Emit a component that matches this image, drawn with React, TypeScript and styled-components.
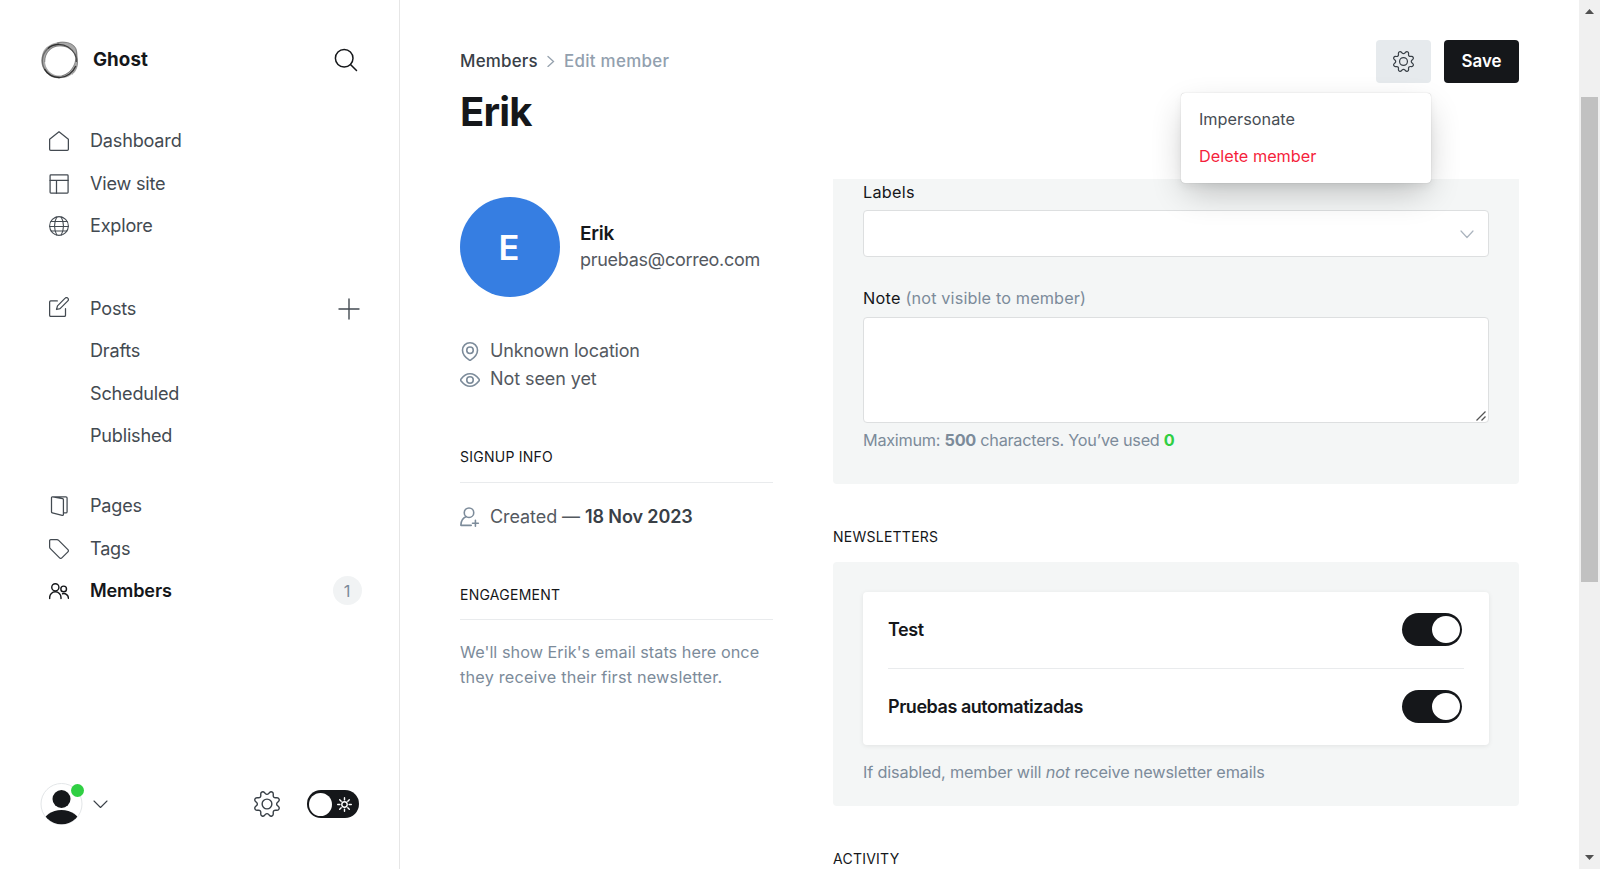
import React from 'react';
import styled, { createGlobalStyle, css } from 'styled-components';

const GlobalStyle = createGlobalStyle`
  *, *::before, *::after { box-sizing: border-box; }
  html, body { margin: 0; padding: 0; overflow: hidden; background: #fff; }
  body { font-family: Inter, "Liberation Sans", sans-serif; color: #15171a; }
  button { font: inherit; }
`;

const Page = styled.div`
  display: flex;
  width: 1600px;
  height: 869px;
  overflow: hidden;
`;

/* ---------- sidebar ---------- */

const Sidebar = styled.aside`
  display: flex;
  flex-direction: column;
  flex: none;
  width: 400px;
  border-right: 1px solid #e6e6e6;
`;

const Brand = styled.header`
  display: flex;
  align-items: center;
  height: 80px;
  margin-top: 20px;
  padding: 0 41px 0 40px;
`;

const BrandName = styled.span`
  flex: 1;
  margin-left: 13px;
  font-size: 18.75px;
  font-weight: 700;
  line-height: 24px;
  letter-spacing: 0.05px;
`;

const Nav = styled.nav`
  flex: 1;
  padding: 20px 37px 0 49px;
`;

const NavGroup = styled.div<{ $gap: number }>`
  margin-bottom: ${(p) => p.$gap}px;
`;

const NavItem = styled.a<{ $active?: boolean }>`
  display: grid;
  grid-template-columns: 20px 1fr auto;
  column-gap: 21px;
  align-items: center;
  height: 42.4px;
  font-size: 18.1px;
  line-height: 24px;
  letter-spacing: ${(p) => (p.$active ? -0.15 : -0.2)}px;
  color: ${(p) => (p.$active ? '#15171a' : '#434a51')};
  font-weight: ${(p) => (p.$active ? 600 : 400)};
`;

const NavLabel = styled.span`
  grid-column: 2;
  padding-bottom: 2px;
`;

const RaisedIcon = styled.span`
  display: flex;
  padding-bottom: 3px;
`;

const AddIcon = styled.span`
  display: flex;
  margin-right: 1px;
`;

const Badge = styled.span`
  display: flex;
  align-items: center;
  justify-content: center;
  width: 29px;
  height: 29px;
  padding-right: 1px;
  border-radius: 15px;
  background: #f1f3f4;
  color: #7c8b9a;
  font-size: 16.5px;
  font-weight: 400;
`;

const SidebarFooter = styled.footer`
  display: flex;
  align-items: center;
  height: 42px;
  margin-bottom: 44px;
  padding: 0 40px;
  color: #394047;
`;

const UserAvatar = styled.div`
  position: relative;
  width: 43px;
  height: 42px;
`;

const StatusDot = styled.span`
  position: absolute;
  top: 1px;
  right: -1px;
  width: 13px;
  height: 13px;
  border-radius: 50%;
  background: #30cf43;
`;

const UserChevron = styled.span`
  display: flex;
  flex: 1;
  padding-left: 10px;
`;

const ThemeSwitch = styled.div`
  display: flex;
  align-items: center;
  justify-content: space-between;
  width: 52px;
  height: 28px;
  margin-left: 27.5px;
  padding: 0 7px 0 2px;
  border-radius: 14px;
  background: #15171a;
`;

const ThemeKnob = styled.span`
  width: 23px;
  height: 23px;
  border-radius: 50%;
  background: #fff;
`;

/* ---------- main ---------- */

const Main = styled.main`
  flex: 1;
  min-width: 0;
  padding: 0 60px;
  height: 869px;
  overflow: hidden;
`;

const TopBar = styled.header`
  display: flex;
  justify-content: space-between;
  height: 179px;
  padding-top: 40px;
`;

const Crumbs = styled.div`
  display: flex;
  align-items: center;
  height: 42px;
  font-size: 16.9px;
  line-height: 24px;
  font-weight: 500;
  letter-spacing: 0.22px;
  color: #394047;
`;

const CrumbCurrent = styled.span`
  letter-spacing: 0.32px;
  color: #92a0ae;
`;

const CrumbArrow = styled.span`
  display: flex;
  margin: 0 9px 0 9px;
`;

const Title = styled.h1`
  margin: 4px 0 0;
  font-size: 40px;
  line-height: 52px;
  font-weight: 700;
  letter-spacing: -0.8px;
`;

const Actions = styled.div`
  position: relative;
  display: flex;
  gap: 13px;
  height: 43px;
`;

const IconButton = styled.button`
  display: flex;
  align-items: center;
  justify-content: center;
  width: 55px;
  padding: 0 0 1px;
  border: 0;
  border-radius: 4px;
  background: #e6eaed;
  color: #394047;
`;

const SaveButton = styled.button`
  width: 75px;
  padding: 0 0 2px;
  border: 0;
  border-radius: 4px;
  background: #15171a;
  color: #fff;
  font-size: 16.9px;
  font-weight: 600;
`;

const Menu = styled.ul`
  position: absolute;
  top: 53px;
  right: 88px;
  z-index: 2;
  width: 250px;
  height: 90px;
  margin: 0;
  padding: 7px 18px;
  list-style: none;
  border-radius: 4px;
  background: #fff;
  box-shadow: 0 0 1px rgba(0, 0, 0, 0.3), 0 4px 9px rgba(0, 0, 0, 0.05),
    0 13px 34px -5px rgba(0, 0, 0, 0.24);
`;

const MenuItem = styled.li<{ $danger?: boolean }>`
  display: flex;
  align-items: center;
  height: 37px;
  font-size: 16.25px;
  letter-spacing: 0.01px;
  color: ${(p) => (p.$danger ? '#f51f3c' : '#474d54')};
`;

const Columns = styled.div`
  display: grid;
  grid-template-columns: 313px 686px;
  column-gap: 60px;
`;

const Profile = styled.section`
  display: flex;
  align-items: center;
  gap: 20px;
  margin-top: 18px;
  height: 100px;
`;

const Initial = styled.div`
  display: flex;
  align-items: center;
  justify-content: center;
  width: 100px;
  height: 100px;
  padding-right: 2px;
  border-radius: 50%;
  background: #367ee2;
  color: #fff;
  font-size: 34.5px;
  font-weight: 600;
`;

const ProfileName = styled.div`
  font-size: 19px;
  font-weight: 600;
  line-height: 27px;
  letter-spacing: -0.2px;
`;

const ProfileEmail = styled.div`
  margin-top: -1px;
  padding-bottom: 1px;
  font-size: 18px;
  line-height: 27px;
  letter-spacing: -0.28px;
  color: #54595f;
`;

const InfoList = styled.div`
  margin-top: 40px;
`;

const InfoLine = styled.div<{ $shift?: number; $spacing?: number }>`
  display: grid;
  grid-template-columns: 20px 1fr;
  column-gap: 10px;
  align-items: center;
  height: 28px;
  font-size: 18px;
  line-height: 28px;
  letter-spacing: ${(p) => p.$spacing ?? -0.08}px;
  color: #54595f;

  svg { color: #7c8b9a; margin-top: ${(p) => p.$shift ?? 0}px; }
  b { color: #394047; font-weight: 600; letter-spacing: -0.1px; }
`;

const SectionTitle = styled.h4<{ $height?: number; $ruled?: boolean }>`
  display: flex;
  margin: 0;
  height: ${(p) => p.$height}px;
  font-size: 14px;
  line-height: 20px;
  font-weight: 400;
  letter-spacing: 0.25px;
  text-transform: uppercase;
  ${(p) =>
    p.$ruled &&
    css`
      border-bottom: 1px solid #e9ebed;
    `}
`;

const SideSection = styled.section<{ $top: number }>`
  margin-top: ${(p) => p.$top}px;
`;

const CreatedLine = styled(InfoLine)`
  margin-top: 20px;
`;

const EmptyStats = styled.p`
  margin: 20px 0 0;
  font-size: 16.25px;
  line-height: 25px;
  letter-spacing: 0.19px;
  color: #7c8b9a;

  &::first-line { letter-spacing: 0.03px; }
`;

const Panel = styled.section<{ $height: number; $cut?: boolean }>`
  height: ${(p) => p.$height}px;
  padding: ${(p) => (p.$cut ? '1px 30px 0' : '30px 30px 0')};
  border-radius: ${(p) => (p.$cut ? '0 0 4px 4px' : '4px')};
  background: #f4f6f6;
`;

const FieldLabel = styled.label<{ $top: number; $height: number }>`
  display: block;
  margin-top: ${(p) => p.$top}px;
  height: ${(p) => p.$height}px;
  font-size: 16.25px;
  line-height: 24px;
  letter-spacing: 0.27px;
`;

const Muted = styled.span`
  letter-spacing: 0.13px;
  color: #7c8b9a;
`;

const Select = styled.div`
  display: flex;
  align-items: center;
  justify-content: flex-end;
  height: 47px;
  padding: 1px 14px 0 0;
  border: 1px solid #dddfe0;
  border-radius: 4px;
  background: #fff;
  color: #abb4be;
`;

const NoteArea = styled.div`
  display: flex;
  align-items: flex-end;
  justify-content: flex-end;
  height: 106px;
  padding: 0 2px 1px 0;
  border: 1px solid #dddfe0;
  border-radius: 4px;
  background: #fff;
`;

const HelpText = styled.p<{ $top: number; $spacing: number }>`
  margin: ${(p) => p.$top}px 0 0;
  font-size: 16.25px;
  line-height: 24px;
  letter-spacing: ${(p) => p.$spacing}px;
  color: #7c8b9a;
`;

const Count = styled.b`
  color: #30cf43;
`;

const Card = styled.div`
  height: 153px;
  padding: 0 25px;
  border-radius: 4px;
  background: #fff;
  box-shadow: 0 1px 5px rgba(0, 0, 0, 0.08);
`;

const NewsletterRow = styled.div`
  display: flex;
  align-items: center;
  justify-content: space-between;
  height: 76px;
  padding: 0 2px 2px 0;
  font-size: 18px;
  font-weight: 600;
  letter-spacing: -0.46px;

  & + & {
    height: 77px;
    border-top: 1px solid #e9ebed;
  }
`;

const Toggle = styled.span`
  display: flex;
  align-items: center;
  justify-content: flex-end;
  width: 60px;
  height: 33px;
  padding-right: 2px;
  border-radius: 17px;
  background: #15171a;

  &::after {
    content: '';
    width: 28px;
    height: 27px;
    border-radius: 50%;
    background: #fff;
  }
`;

const Scrollbar = styled.div`
  display: flex;
  flex-direction: column;
  align-items: center;
  flex: none;
  width: 21px;
  height: 869px;
  background: #f0f0f0;
`;

const ScrollTrack = styled.div`
  flex: 1;
  width: 17px;
  padding-top: 74px;
`;

const ScrollThumb = styled.div`
  height: 485px;
  background: #c1c1c1;
`;

const ScrollArrow = styled.span<{ $up?: boolean }>`
  display: flex;
  align-items: center;
  height: 23px;
  transform: ${(p) => (p.$up ? 'rotate(180deg)' : 'none')};
`;

/* ---------- icons ---------- */

type IconProps = { w?: number; h?: number; box?: string; sw?: number; children: React.ReactNode };

const Icon = ({ w = 20, h = w, box = '0 0 24 24', sw = 1.5, children }: IconProps) => (
  <svg
    width={w}
    height={h}
    viewBox={box}
    fill="none"
    stroke="currentColor"
    strokeWidth={sw}
    strokeLinecap="round"
    strokeLinejoin="round"
  >
    {children}
  </svg>
);

const OrbIcon = () => (
  <svg width="40" height="40" viewBox="0 0 40 40" fill="none">
    <path
      fillRule="evenodd"
      fill="#333"
      fillOpacity="0.42"
      d="M15 3C21 1 29 1.200 34 5.500C37.500 9 37.500 13 37.800 17C39 26 35.500 33 28.500 36.500C22 39.500 12 38.500 6.500 33C1 27 .6 18 3 12C5.500 7 10 4.500 15 3ZM21 6.200C13 5.700 6.800 11 5.300 18C3.800 26 8.300 33 16 35.200C22 36.700 27.500 33.700 31.500 29C35.500 24 37 18 35 13.500C32.500 8.500 27 6.500 21 6.200Z"
    />
    <path d="M19 4.200C9.500 4.500 2.500 12 2.200 20.500C2 30 10 37.700 19.500 37.600" stroke="#444" strokeOpacity="0.6" strokeWidth="1.600" />
    <path d="M4.500 29C8 35 14 37.800 20.500 37.400C27 37 33 32.500 35.800 26" stroke="#222" strokeOpacity="0.85" strokeWidth="1.400" />
    <path d="M8 8.500C13 3.500 22 3 28 7C34 11 36.800 17 36.200 22" stroke="#222" strokeOpacity="0.8" strokeWidth="1.300" />
    <path d="M17 3C24 1.200 32 2 35.800 8.500C37.300 13 36.500 18 34.500 24C32 30 28 34 22 36" stroke="#555" strokeOpacity="0.5" strokeWidth="1" />
    <path d="M4.800 22C4.500 13 11 5.500 20 5.800C28 6 35 11 37.200 19C38.300 25 36.300 31 32 34.500" stroke="#555" strokeOpacity="0.5" strokeWidth="1" />
  </svg>
);

const GearIcon = ({ size, sw }: { size: number; sw: number }) => (
  <Icon w={size} sw={sw}>
    <path d="M10.546 2.438a1.957 1.957 0 0 0 2.908 0L14.4 1.4a1.959 1.959 0 0 1 3.41 1.413l-.071 1.4A1.958 1.958 0 0 0 19.79 6.266l1.4-.071A1.959 1.959 0 0 1 22.6 9.6l-1.041.94a1.96 1.96 0 0 0 0 2.909l1.041.94a1.959 1.959 0 0 1-1.413 3.41l-1.4-.071a1.958 1.958 0 0 0-2.056 2.056l.071 1.4A1.959 1.959 0 0 1 14.4 22.6l-.941-1.041a1.959 1.959 0 0 0-2.908 0L9.606 22.6A1.959 1.959 0 0 1 6.2 21.192l.072-1.4a1.958 1.958 0 0 0-2.056-2.056l-1.4.071A1.958 1.958 0 0 1 1.4 14.4l1.041-.94a1.96 1.96 0 0 0 0-2.909L1.4 9.606A1.958 1.958 0 0 1 2.813 6.2l1.4.071A1.958 1.958 0 0 0 6.269 4.211L6.2 2.813A1.958 1.958 0 0 1 9.606 1.4Z" />
    <circle cx="12" cy="12" r="4.500" />
  </Icon>
);

const HomeIcon = () => (
  <Icon>
    <path d="M.75 9.800L12 .95l11.250 8.850V22a1.200 1.200 0 0 1-1.200 1.200H1.950A1.200 1.200 0 0 1 .75 22Z" />
  </Icon>
);

const LayoutIcon = () => (
  <Icon>
    <rect x="1.300" y="1" width="21.600" height="22" rx="1" />
    <path d="M1.300 7.700h21.600M9 7.700V23" />
  </Icon>
);

const GlobeIcon = () => (
  <Icon sw={1.3}>
    <circle cx="12" cy="12" r="11.250" />
    <path d="M2.300 6.500h19.400M.75 12.500h22.500M2.500 18h19M9.500 1c-3.800 6.500-3.800 15.500 0 22M14.500 1c3.800 6.500 3.800 15.500 0 22" />
  </Icon>
);

const EditIcon = () => (
  <RaisedIcon>
    <Icon>
      <path d="M19.800 14v8a1.300 1.300 0 0 1-1.300 1.300H2A1.300 1.300 0 0 1 .75 22V6A1.300 1.300 0 0 1 2 4.700h8" />
      <path d="M22.600 1.400a2.200 2.200 0 0 0-3.200 0L10.200 10.700 9 15l4.300-1.100 9.300-9.300a2.200 2.200 0 0 0 0-3.200Z" />
    </Icon>
  </RaisedIcon>
);

const PagesIcon = () => (
  <Icon>
    <path d="M3 2a1.100 1.100 0 0 1 1.500-1L16.300 3.200a1.300 1.300 0 0 1 1 1.300V22a1.200 1.200 0 0 1-1.500 1.200L4 20.300a1.300 1.300 0 0 1-1-1.300ZM4.500 1h15.700A1.500 1.500 0 0 1 21.700 2.500V18.800a1.500 1.500 0 0 1-1.500 1.500H17.300" />
  </Icon>
);

const TagIcon = () => (
  <Icon>
    <path d="M.75 2.200A1.400 1.400 0 0 1 2.200.75H9.500a3 3 0 0 1 2.100.9L22.700 12.700a1.900 1.900 0 0 1 0 2.700l-7.300 7.300a1.900 1.900 0 0 1-2.700 0L1.600 11.600A3 3 0 0 1 .75 9.500Z" />
  </Icon>
);

const MembersIcon = () => (
  <Icon sw={1.7}>
    <circle cx="7.600" cy="7.600" r="4.300" />
    <path d="M.8 21v-1.300a6.800 6.800 0 0 1 13.600 0V21" />
    <circle cx="17.600" cy="9.500" r="3.400" />
    <path d="M16.300 15.300a5.600 5.600 0 0 1 7 5.500" />
  </Icon>
);

const nav: { gap: number; items: { label: string; icon?: React.ReactNode; end?: React.ReactNode; active?: boolean }[] }[] = [
  {
    gap: 40.4,
    items: [
      { label: 'Dashboard', icon: <HomeIcon /> },
      { label: 'View site', icon: <LayoutIcon /> },
      { label: 'Explore', icon: <GlobeIcon /> },
    ],
  },
  {
    gap: 27.8,
    items: [
      {
        label: 'Posts',
        icon: <EditIcon />,
        end: (
          <AddIcon>
            <Icon w={24} sw={1.4}>
              <path d="M12 2v20M2 12h20" />
            </Icon>
          </AddIcon>
        ),
      },
      { label: 'Drafts' },
      { label: 'Scheduled' },
      { label: 'Published' },
    ],
  },
  {
    gap: 0,
    items: [
      { label: 'Pages', icon: <PagesIcon /> },
      { label: 'Tags', icon: <TagIcon /> },
      { label: 'Members', icon: <MembersIcon />, end: <Badge>1</Badge>, active: true },
    ],
  },
];

const ArrowGlyph = () => (
  <svg width="9" height="5" viewBox="0 0 9 5">
    <path d="M0 0h9L4.500 5Z" fill="#505050" />
  </svg>
);

export default function App() {
  return (
    <>
      <GlobalStyle />
      <Page>
        <Sidebar>
          <Brand>
            <OrbIcon />
            <BrandName>Ghost</BrandName>
            <Icon w={24} sw={1.5}>
              <circle cx="10.200" cy="10.200" r="8.800" />
              <path d="M16.500 16.500l6 6" />
            </Icon>
          </Brand>
          <Nav>
            {nav.map((group, i) => (
              <NavGroup key={i} $gap={group.gap}>
                {group.items.map((item) => (
                  <NavItem key={item.label} $active={item.active}>
                    {item.icon}
                    <NavLabel>{item.label}</NavLabel>
                    {item.end}
                  </NavItem>
                ))}
              </NavGroup>
            ))}
          </Nav>
          <SidebarFooter>
            <UserAvatar>
              <svg width="43" height="42" viewBox="0 0 43 42">
                <clipPath id="face">
                  <circle cx="21.500" cy="20.700" r="20.500" />
                </clipPath>
                <circle cx="21.500" cy="21" r="20.500" fill="#fff" stroke="#e3e6e8" />
                <g clipPath="url(#face)" fill="#15171a">
                  <circle cx="21.500" cy="16" r="9" />
                  <ellipse cx="21.500" cy="40" rx="18" ry="13" />
                </g>
              </svg>
              <StatusDot />
            </UserAvatar>
            <UserChevron>
              <Icon w={15} h={9} box="0 0 15 9" sw={1.1}>
                <path d="M1 1l6.500 6.500L14 1" />
              </Icon>
            </UserChevron>
            <GearIcon size={26} sw={1.3} />
            <ThemeSwitch>
              <ThemeKnob />
              <svg width="15" height="15" viewBox="0 0 15 15" fill="none" stroke="#fff" strokeWidth="1.400" strokeLinecap="round">
                <circle cx="7.500" cy="7.500" r="2.700" />
                <path d="M7.500.7v2.200M7.500 12.100v2.200M.7 7.500h2.200M12.100 7.500h2.200M2.700 2.700l1.500 1.500M10.800 10.800l1.500 1.500M12.300 2.700l-1.500 1.500M4.200 10.800l-1.500 1.500" />
              </svg>
            </ThemeSwitch>
          </SidebarFooter>
        </Sidebar>

        <Main>
          <TopBar>
            <div>
              <Crumbs>
                <span>Members</span>
                <CrumbArrow>
                  <svg width="8" height="12" viewBox="0 0 8 12" fill="none" stroke="#95a1ad" strokeWidth="1.300" strokeLinecap="round">
                    <path d="M1 1.500l5.500 5L1 11.500" />
                  </svg>
                </CrumbArrow>
                <CrumbCurrent>Edit member</CrumbCurrent>
              </Crumbs>
              <Title>Erik</Title>
            </div>
            <Actions>
              <IconButton>
                <GearIcon size={21} sw={1.4} />
              </IconButton>
              <SaveButton>Save</SaveButton>
              <Menu>
                <MenuItem>Impersonate</MenuItem>
                <MenuItem $danger>Delete member</MenuItem>
              </Menu>
            </Actions>
          </TopBar>

          <Columns>
            <div>
              <Profile>
                <Initial>E</Initial>
                <div>
                  <ProfileName>Erik</ProfileName>
                  <ProfileEmail>pruebas@correo.com</ProfileEmail>
                </div>
              </Profile>
              <InfoList>
                <InfoLine $spacing={-0.19}>
                  <Icon sw={1.9}>
                    <path d="M12 2a9 9 0 0 1 9 9c0 4.700-4.300 9.300-8.300 12a1.300 1.300 0 0 1-1.400 0C7.300 20.300 3 15.700 3 11a9 9 0 0 1 9-9Z" />
                    <circle cx="12" cy="11" r="3.900" />
                  </Icon>
                  <span>Unknown location</span>
                </InfoLine>
                <InfoLine $shift={1}>
                  <Icon sw={1.9}>
                    <path d="M12 4.500c4.500-.1 8.300 3.200 10.700 6.200a2 2 0 0 1 0 2.500C20.300 16.200 16.500 19.500 12 19.500S3.700 16.200 1.300 13.200a2 2 0 0 1 0-2.500C3.700 7.700 7.500 4.400 12 4.500Z" />
                    <circle cx="12" cy="12" r="3.900" />
                  </Icon>
                  <span>Not seen yet</span>
                </InfoLine>
              </InfoList>

              <SideSection $top={54}>
                <SectionTitle $height={36} $ruled>Signup info</SectionTitle>
                <CreatedLine>
                  <Icon sw={1.9}>
                    <circle cx="10.800" cy="6.800" r="5.700" />
                    <path d="M7.500 11.500C3.800 13 1.200 16 1 22h12.500M18.500 16v7M15 19.500h7" />
                  </Icon>
                  <span>
                    Created — <b>18 Nov 2023</b>
                  </span>
                </CreatedLine>
              </SideSection>

              <SideSection $top={54}>
                <SectionTitle $height={35} $ruled>Engagement</SectionTitle>
                <EmptyStats>
                  We'll show Erik's email stats here once
                  <br />
                  they receive their first newsletter.
                </EmptyStats>
              </SideSection>
            </div>

            <div>
              <Panel $height={305} $cut>
                <FieldLabel $top={0} $height={30}>Labels</FieldLabel>
                <Select>
                  <Icon w={14} h={9} box="0 0 14 9" sw={1.2}>
                    <path d="M1 1l6 6.500L13 1" />
                  </Icon>
                </Select>
                <FieldLabel $top={29} $height={31}>
                  Note <Muted>(not visible to member)</Muted>
                </FieldLabel>
                <NoteArea>
                  <svg width="10" height="10" viewBox="0 0 10 10" stroke="#555" strokeWidth="1.300">
                    <path d="M.5 9.500l9-9M5.500 9.500l4-4" />
                  </svg>
                </NoteArea>
                <HelpText $top={5} $spacing={-0.27}>
                  Maximum: <b>500</b> characters. You’ve used <Count>0</Count>
                </HelpText>
              </Panel>

              <SideSection $top={43}>
                <SectionTitle $height={35}>Newsletters</SectionTitle>
                <Panel $height={244}>
                  <Card>
                    <NewsletterRow>
                      Test
                      <Toggle />
                    </NewsletterRow>
                    <NewsletterRow>
                      Pruebas automatizadas
                      <Toggle />
                    </NewsletterRow>
                  </Card>
                  <HelpText $top={15} $spacing={-0.165}>
                    If disabled, member will <em>not</em> receive newsletter emails
                  </HelpText>
                </Panel>
              </SideSection>

              <SideSection $top={43}>
                <SectionTitle $height={35}>Activity</SectionTitle>
              </SideSection>
            </div>
          </Columns>
        </Main>

        <Scrollbar>
          <ScrollArrow $up>
            <ArrowGlyph />
          </ScrollArrow>
          <ScrollTrack>
            <ScrollThumb />
          </ScrollTrack>
          <ScrollArrow>
            <ArrowGlyph />
          </ScrollArrow>
        </Scrollbar>
      </Page>
    </>
  );
}
